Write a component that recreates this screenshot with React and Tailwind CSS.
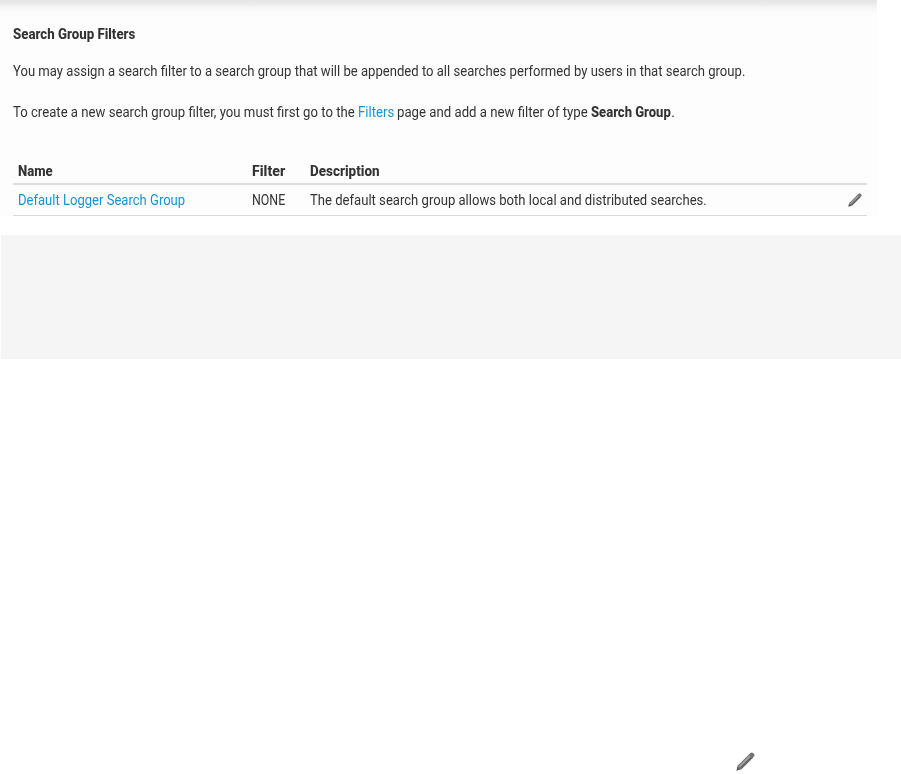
import { useLayoutEffect, useRef, useState } from 'react';

// Condenses a run of text horizontally so that it fills the given width.
function Run({ width, className = '', children }) {
  const ref = useRef(null);
  const [scale, setScale] = useState(1);
  useLayoutEffect(() => {
    setScale(width / ref.current.offsetWidth);
  }, [width, children]);
  return (
    <span className={`inline-block whitespace-nowrap align-top ${className}`} style={{ width }}>
      <span ref={ref} className="inline-block origin-left" style={{ transform: `scaleX(${scale})` }}>
        {children}
      </span>
    </span>
  );
}

function Pencil({ className }) {
  return (
    <svg viewBox="0 0 18 18" className={className}>
      <path d="M0.5 17.5 1.6 12.9 12.2 2.3 15.7 5.8 5.1 16.4Z" fill="#7c7c7c" />
      <path d="M3.2 14 13.3 3.9" stroke="#a0a0a0" strokeWidth="1.6" />
      <path d="M4.6 15.4 15 5" stroke="#666" strokeWidth="1.8" />
      <path d="M11.9 2.6 14.1.6Q15.1 0 16.1.9L17.1 1.9Q18 2.9 17.3 3.9L15.4 6.1Z" fill="#747474" />
      <path d="M0.5 17.5 1.4 13.8 4.2 16.6Z" fill="#5c5c5c" />
    </svg>
  );
}

export default function App() {
  return (
    <div className="flex h-[774px] w-[901px] flex-col overflow-hidden bg-white font-['Roboto',sans-serif] text-[15px] leading-[20px] text-[#333]">
      <main className="h-[216px] w-[877px] shrink-0 bg-[#fdfdfd] bg-[linear-gradient(to_bottom,#e4e4e4_0,#e9e9e9_3px,#f4f4f4_7px,#fafafa_11px,#fdfdfd_15px)] pr-[10px] pl-[13px]">
        <h1 className="flex h-[61px] pt-[24px] font-extrabold"><Run width={122}>Search Group Filters</Run></h1>
        <p className="flex h-[41px]"><Run width={732}>You may assign a search filter to a search group that will be appended to all searches performed by users in that search group.</Run></p>
        <p className="flex h-[59px]">
          <Run width={342} className="mr-[3px]">To create a new search group filter, you must first go to the</Run>
          <a className="mr-[3px] text-[#1495d3]"><Run width={36}>Filters</Run></a>
          <Run width={191} className="mr-[3px]">page and add a new filter of type</Run>
          <b className="font-extrabold"><Run width={80}>Search Group</Run></b>
          <Run width={4}>.</Run>
        </p>
        <div className="grid h-[24px] grid-cols-[234px_58px_1fr] border-b-2 border-[#dedede] pl-[5px] font-extrabold">
          <Run width={35}>Name</Run>
          <Run width={33}>Filter</Run>
          <Run width={70}>Description</Run>
        </div>
        <div className="grid h-[31px] grid-cols-[234px_58px_1fr_20px] border-b border-[#d9d9d9] pt-[5px] pl-[5px]">
          <a className="text-[#1495d3]"><Run width={167}>Default Logger Search Group</Run></a>
          <Run width={33}>NONE</Run>
          <Run width={397}>The default search group allows both local and distributed searches.</Run>
          <Pencil className="mt-[3px] ml-px h-[14px] w-[14px]" />
        </div>
      </main>
      <div className="mt-[19px] ml-px h-[124px] shrink-0 bg-[#f5f5f5]" />
      <div className="flex grow items-end pb-[3px] pl-[736px]">
        <Pencil className="h-[19px] w-[19px] blur-[0.5px]" />
      </div>
    </div>
  );
}
